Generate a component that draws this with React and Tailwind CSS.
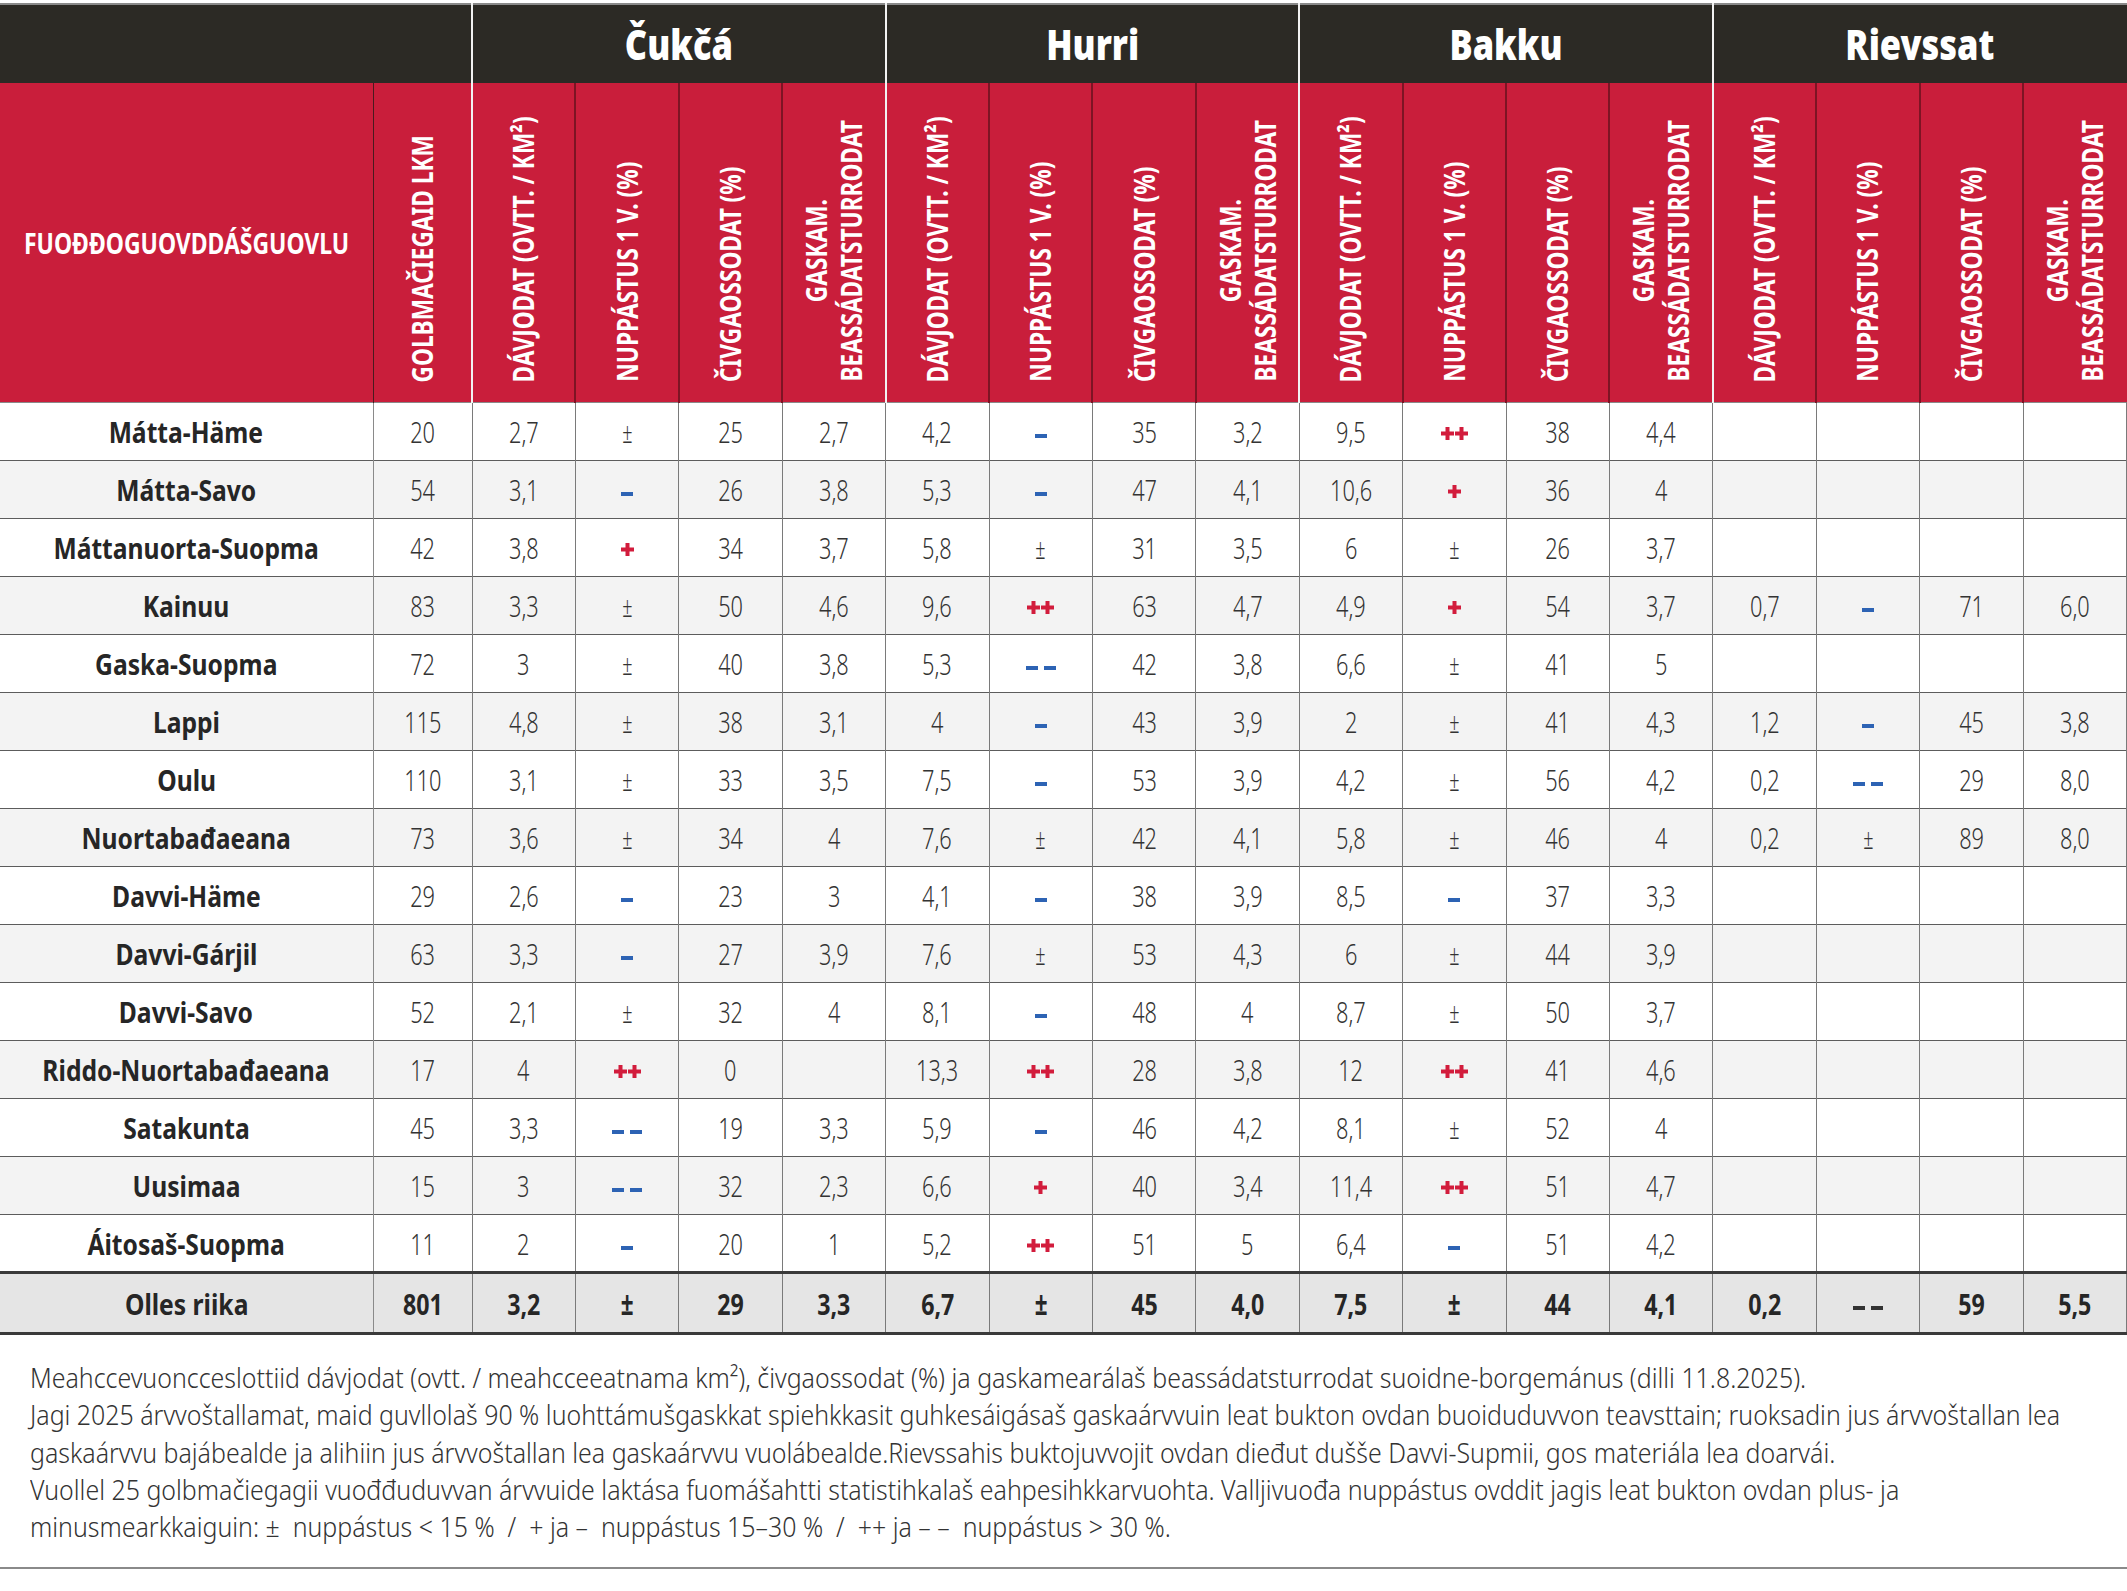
const GROUPS = ["Čukčá", "Hurri", "Bakku", "Rievssat"];

const SUB_HEADS = [
  ["DÁVJODAT (OVTT. / KM²)"],
  ["NUPPÁSTUS 1 V. (%)"],
  ["ČIVGAOSSODAT (%)"],
  ["GASKAM.", "BEASSÁDATSTURRODAT"],
];

const ROWS = [
  ["Mátta-Häme", "20", "2,7", "±", "25", "2,7", "4,2", "-", "35", "3,2", "9,5", "++", "38", "4,4", "", "", "", ""],
  ["Mátta-Savo", "54", "3,1", "-", "26", "3,8", "5,3", "-", "47", "4,1", "10,6", "+", "36", "4", "", "", "", ""],
  ["Máttanuorta-Suopma", "42", "3,8", "+", "34", "3,7", "5,8", "±", "31", "3,5", "6", "±", "26", "3,7", "", "", "", ""],
  ["Kainuu", "83", "3,3", "±", "50", "4,6", "9,6", "++", "63", "4,7", "4,9", "+", "54", "3,7", "0,7", "-", "71", "6,0"],
  ["Gaska-Suopma", "72", "3", "±", "40", "3,8", "5,3", "--", "42", "3,8", "6,6", "±", "41", "5", "", "", "", ""],
  ["Lappi", "115", "4,8", "±", "38", "3,1", "4", "-", "43", "3,9", "2", "±", "41", "4,3", "1,2", "-", "45", "3,8"],
  ["Oulu", "110", "3,1", "±", "33", "3,5", "7,5", "-", "53", "3,9", "4,2", "±", "56", "4,2", "0,2", "--", "29", "8,0"],
  ["Nuortabađaeana", "73", "3,6", "±", "34", "4", "7,6", "±", "42", "4,1", "5,8", "±", "46", "4", "0,2", "±", "89", "8,0"],
  ["Davvi-Häme", "29", "2,6", "-", "23", "3", "4,1", "-", "38", "3,9", "8,5", "-", "37", "3,3", "", "", "", ""],
  ["Davvi-Gárjil", "63", "3,3", "-", "27", "3,9", "7,6", "±", "53", "4,3", "6", "±", "44", "3,9", "", "", "", ""],
  ["Davvi-Savo", "52", "2,1", "±", "32", "4", "8,1", "-", "48", "4", "8,7", "±", "50", "3,7", "", "", "", ""],
  ["Riddo-Nuortabađaeana", "17", "4", "++", "0", "", "13,3", "++", "28", "3,8", "12", "++", "41", "4,6", "", "", "", ""],
  ["Satakunta", "45", "3,3", "--", "19", "3,3", "5,9", "-", "46", "4,2", "8,1", "±", "52", "4", "", "", "", ""],
  ["Uusimaa", "15", "3", "--", "32", "2,3", "6,6", "+", "40", "3,4", "11,4", "++", "51", "4,7", "", "", "", ""],
  ["Áitosaš-Suopma", "11", "2", "-", "20", "1", "5,2", "++", "51", "5", "6,4", "-", "51", "4,2", "", "", "", ""],
];

const TOTAL = ["Olles riika", "801", "3,2", "±", "29", "3,3", "6,7", "±", "45", "4,0", "7,5", "±", "44", "4,1", "0,2", "--", "59", "5,5"];

const NOTES = [
  "Meahccevuoncceslottiid dávjodat (ovtt. / meahcceeatnama km²), čivgaossodat (%) ja gaskamearálaš beassádatsturrodat suoidne-borgemánus (dilli 11.8.2025).",
  "Jagi 2025 árvvoštallamat, maid guvllolaš 90 % luohttámušgaskkat spiehkkasit guhkesáigásaš gaskaárvvuin leat bukton ovdan buoiduduvvon teavsttain; ruoksadin jus árvvoštallan lea",
  "gaskaárvvu bajábealde ja alihiin jus árvvoštallan lea gaskaárvvu vuolábealde.Rievssahis buktojuvvojit ovdan dieđut dušše Davvi-Supmii, gos materiála lea doarvái.",
  "Vuollel 25 golbmačiegagii vuođđuduvvan árvvuide laktása fuomášahtti statistihkalaš eahpesihkkarvuohta. Valljivuođa nuppástus ovddit jagis leat bukton ovdan plus- ja",
  "minusmearkkaiguin: ±  nuppástus < 15 %  /  + ja –  nuppástus 15–30 %  /  ++ ja – –  nuppástus > 30 %.",
];

function Plus({ color }) {
  return (
    <svg width="13" height="13" viewBox="0 0 13 13" className="block">
      <path d="M4.5 0h4v4.5H13v4H8.5V13h-4V8.5H0v-4h4.5z" fill={color} />
    </svg>
  );
}

function Minus({ color }) {
  return (
    <svg width="12" height="4" viewBox="0 0 12 4" className="block">
      <rect width="12" height="4" fill={color} />
    </svg>
  );
}

function Sym({ v, total }) {
  const red = "#d21c3c";
  const blue = total ? "#333333" : "#2d63b4";
  let inner = null;
  if (v === "±")
    inner = (
      <span className={`inline-block ${total ? "text-[32px] font-bold scale-x-[0.7]" : "text-[29px] font-light scale-x-[0.62]"}`}>
        ±
      </span>
    );
  if (v === "+") inner = <Plus color={red} />;
  if (v === "++")
    inner = (
      <>
        <Plus color={red} />
        <Plus color={red} />
      </>
    );
  if (v === "-") inner = <Minus color={blue} />;
  if (v === "--")
    inner = (
      <span className="flex gap-[6px]">
        <Minus color={blue} />
        <Minus color={blue} />
      </span>
    );
  return <span className="inline-flex items-center justify-center h-[30px] gap-[1px]">{inner}</span>;
}

function Cell({ v, i, total }) {
  const sym = i >= 3 && (i - 3) % 4 === 0;
  const groupEdge = i === 2 || i === 6 || i === 10 || i === 14;
  return (
    <td
      className={`border-r ${groupEdge ? "border-l border-l-[#333]" : ""} border-[#7a7a7a] text-center align-middle leading-none ${
        total ? "font-bold text-[29px] text-[#262626]" : "font-light text-[29px] text-[#333]"
      }`}
    >
      {sym ? (
        <Sym v={v} total={total} />
      ) : (
        <span className={`inline-block ${total ? "scale-x-[0.8]" : "scale-x-[0.75]"}`}>{v}</span>
      )}
    </td>
  );
}

function RegionCell({ name }) {
  return (
    <td className="border-r border-[#8a8a8a] text-center align-middle text-[29px] font-bold text-[#262626] leading-none">
      <span className="inline-block scale-x-[0.85] whitespace-nowrap">{name}</span>
    </td>
  );
}

// rotated header: text starts at the bottom, squeezed along its length
function RotHead({ lines }) {
  return (
    <div className="h-[319px] flex flex-col items-center justify-end pb-[20px]">
      <div className="[writing-mode:vertical-rl] rotate-180 h-max text-[28px] leading-[35px] font-bold text-white whitespace-nowrap">
        {lines.map((l) => (
          <div key={l} className="origin-top scale-y-[0.81]">
            {l}
          </div>
        ))}
      </div>
    </div>
  );
}

export default function App() {
  return (
    <div className="w-[2127px] min-h-[1591px] bg-white pt-[3px] overflow-hidden font-['Noto_Sans','Open_Sans',sans-serif]">
      <table className="table-fixed border-collapse w-[2127px] border-t-2 border-[#8a8a8a]">
        <colgroup>
          <col className="w-[373px]" />
          <col className="w-[99px]" />
          {Array.from({ length: 16 }).map((_, i) => (
            <col key={i} />
          ))}
        </colgroup>
        <thead>
          <tr className="h-[79px] bg-[#2c2a25]">
            <th colSpan={2}></th>
            {GROUPS.map((g) => (
              <th
                key={g}
                colSpan={4}
                className="border-l-2 border-[#f2f2f2] text-white text-[42px] font-black align-middle leading-none"
              >
                <span className="inline-block scale-x-[0.82]">{g}</span>
              </th>
            ))}
          </tr>
          <tr className="bg-[#c91e3b] border-b border-[#8a8a8a]">
            <th className="text-left pl-[24px] text-white text-[28px] font-bold align-middle whitespace-nowrap overflow-hidden">
              <span className="inline-block origin-left scale-x-[0.82]">FUOĐĐOGUOVDDÁŠGUOVLU</span>
            </th>
            <th className="border-l border-[#4a1a1e] align-bottom p-0">
              <RotHead lines={["GOLBMAČIEGAID LKM"]} />
            </th>
            {GROUPS.map((g) =>
              SUB_HEADS.map((h, j) => (
                <th
                  key={g + j}
                  className={`align-bottom p-0 ${
                    j === 0 ? "border-l-2 border-l-[#f2f2f2]" : "border-l-2 border-l-[#7d1424]"
                  }`}
                >
                  <RotHead lines={h} />
                </th>
              ))
            )}
          </tr>
        </thead>
        <tbody>
          {ROWS.map((r, ri) => (
            <tr
              key={r[0]}
              className={`h-[58px] border-b border-[#5c5c5c] ${ri % 2 ? "bg-[#f3f3f3]" : "bg-white"}`}
            >
              <RegionCell name={r[0]} />
              {r.slice(1).map((v, i) => (
                <Cell key={i} v={v} i={i + 1} />
              ))}
            </tr>
          ))}
          <tr className="h-[61px] bg-[#e5e5e5] border-t-[3px] border-b-[3px] border-[#3a3a3a]">
            <RegionCell name={TOTAL[0]} />
            {TOTAL.slice(1).map((v, i) => (
              <Cell key={i} v={v} i={i + 1} total />
            ))}
          </tr>
        </tbody>
      </table>
      <div className="pt-[24px] pb-[22px] pl-[30px] border-b-2 border-[#8a8a8a] overflow-hidden text-[28px] leading-[37.3px] font-light text-[#333]">
        {NOTES.map((n) => (
          <div key={n} className="w-max whitespace-pre origin-left scale-x-[0.89]">
            {n}
          </div>
        ))}
      </div>
    </div>
  );
}
